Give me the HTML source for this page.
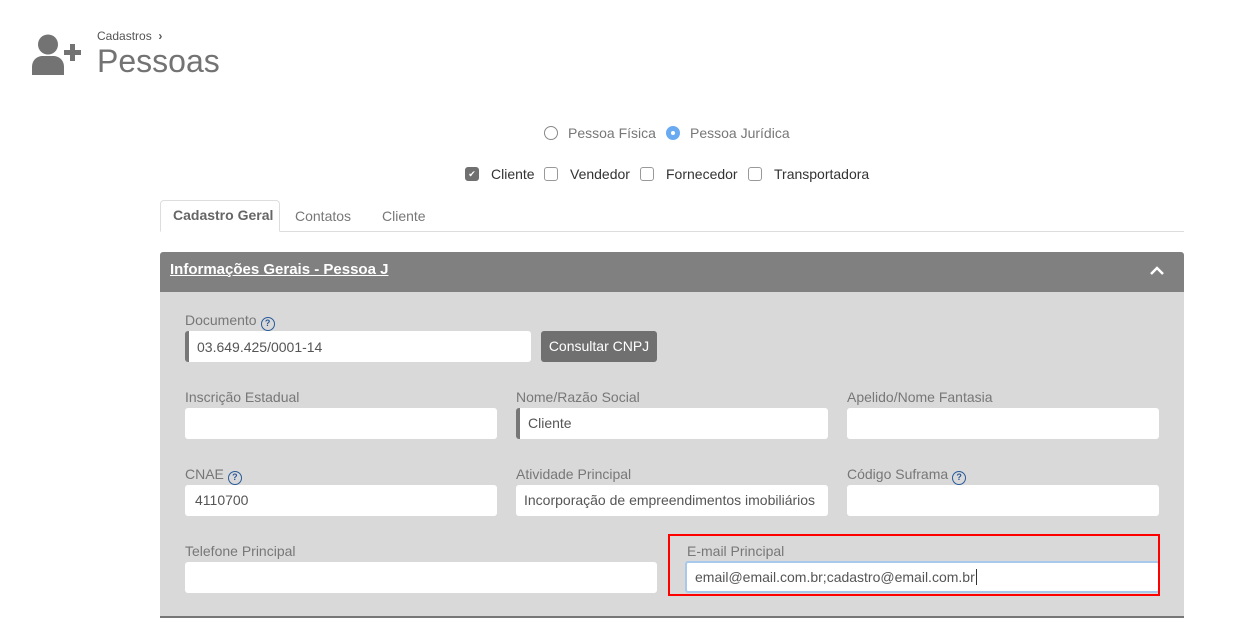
<!DOCTYPE html>
<html><head><meta charset="utf-8"><style>
*{box-sizing:border-box;margin:0;padding:0}
body{width:1234px;height:619px;background:#fff;font-family:"Liberation Sans",sans-serif;position:relative;overflow:hidden;color:#666}
.a{position:absolute}
.lbl{position:absolute;font-size:14px;color:#777}
.inp{position:absolute;background:#fff;border-radius:3px;height:31px;font-size:14px;color:#555;padding:8px 0 0 10px}
.bar{border-left:4px solid #777;padding-left:8px}
.q{display:inline-block;width:14px;height:14px;border:1.5px solid #2a5a9a;border-radius:50%;font-size:9px;font-weight:bold;color:#2a5a9a;text-align:center;line-height:11px;vertical-align:-1px;margin-left:4px}
.cb{position:absolute;width:14px;height:14px;border:1px solid #999;border-radius:3px;background:#fff}
.t{position:absolute;font-size:14px;color:#333}
</style></head><body>
<svg class="a" style="left:31px;top:34px" width="52" height="42" viewBox="0 0 52 42">
<circle cx="17" cy="10.5" r="10" fill="#737373"/>
<path d="M1 41 V33 C1 26 6 22 12 22 H22 C28 22 33 26 33 33 V41 Z" fill="#737373"/>
<rect x="39" y="10" width="5" height="17" fill="#737373"/><rect x="33" y="16" width="17" height="5" fill="#737373"/>
</svg>
<div class="a" style="left:97px;top:29px;font-size:12px;color:#555">Cadastros &nbsp;<b>›</b></div>
<div class="a" style="left:97px;top:43px;font-size:32px;color:#737373">Pessoas</div>

<div class="a" style="left:544px;top:126px;width:14px;height:14px;border:1px solid #888;border-radius:50%"></div>
<div class="t" style="left:568px;top:125px;color:#777">Pessoa Física</div>
<div class="a" style="left:666px;top:126px;width:14px;height:14px;border-radius:50%;background:#6aaaf0"><div class="a" style="left:5px;top:5px;width:4px;height:4px;border-radius:50%;background:#fff"></div></div>
<div class="t" style="left:690px;top:125px;color:#777">Pessoa Jurídica</div>

<div class="cb" style="left:465px;top:167px;background:#707070;border-color:#707070;color:#fff;font-size:9px;text-align:center;line-height:12px">✔</div>
<div class="t" style="left:491px;top:166px">Cliente</div>
<div class="cb" style="left:544px;top:167px"></div><div class="t" style="left:570px;top:166px">Vendedor</div>
<div class="cb" style="left:640px;top:167px"></div><div class="t" style="left:666px;top:166px">Fornecedor</div>
<div class="cb" style="left:748px;top:167px"></div><div class="t" style="left:774px;top:166px">Transportadora</div>

<div class="a" style="left:160px;top:231px;width:1024px;height:1px;background:#ddd"></div>
<div class="a" style="left:160px;top:200px;width:120px;height:32px;border:1px solid #ddd;border-bottom:1px solid #fff;border-radius:4px 4px 0 0;background:#fff"></div>
<div class="t" style="left:173px;top:207px;color:#666;font-weight:bold">Cadastro Geral</div>
<div class="t" style="left:295px;top:208px;color:#777">Contatos</div>
<div class="t" style="left:382px;top:208px;color:#777">Cliente</div>

<div class="a" style="left:160px;top:252px;width:1024px;height:40px;background:#808080;border-radius:3px 3px 0 0"></div>
<div class="a" style="left:170px;top:261px;font-size:15px;font-weight:bold;color:#fff;text-decoration:underline">Informações Gerais - Pessoa J</div>
<svg class="a" style="left:1149px;top:265px" width="16" height="12"><path d="M2 9 L8 3 L14 9" stroke="#fff" stroke-width="2.5" fill="none"/></svg>
<div class="a" style="left:160px;top:292px;width:1024px;height:326px;background:#d9d9d9;border-bottom:2px solid #777"></div>

<div class="lbl" style="left:185px;top:312px">Documento<span class="q">?</span></div>
<div class="inp bar" style="left:185px;top:331px;width:346px">03.649.425/0001-14</div>
<div class="a" style="left:541px;top:331px;width:116px;height:31px;background:#707070;border-radius:3px;color:#fff;font-size:14px;text-align:center;line-height:31px">Consultar CNPJ</div>

<div class="lbl" style="left:185px;top:389px">Inscrição Estadual</div>
<div class="inp" style="left:185px;top:408px;width:312px"></div>
<div class="lbl" style="left:516px;top:389px">Nome/Razão Social</div>
<div class="inp bar" style="left:516px;top:408px;width:312px;padding-top:7px">Cliente</div>
<div class="lbl" style="left:847px;top:389px">Apelido/Nome Fantasia</div>
<div class="inp" style="left:847px;top:408px;width:312px"></div>

<div class="lbl" style="left:185px;top:466px">CNAE<span class="q">?</span></div>
<div class="inp" style="left:185px;top:485px;width:312px;padding-top:7px">4110700</div>
<div class="lbl" style="left:516px;top:466px">Atividade Principal</div>
<div class="inp" style="left:516px;top:485px;width:312px;padding-left:8px;padding-top:7px">Incorporação de empreendimentos imobiliários</div>
<div class="lbl" style="left:847px;top:466px">Código Suframa<span class="q">?</span></div>
<div class="inp" style="left:847px;top:485px;width:312px"></div>

<div class="lbl" style="left:185px;top:543px">Telefone Principal</div>
<div class="inp" style="left:185px;top:562px;width:472px"></div>
<div class="lbl" style="left:687px;top:543px">E-mail Principal</div>
<div class="inp" style="left:685px;top:561px;width:475px;height:32px;border:2px solid #a8c8ec;padding-top:6px;padding-left:8px">email@email.com.br;cadastro@email.com.br<span style="border-left:1px solid #333;margin-left:1px"></span></div>
<div class="a" style="left:668px;top:534px;width:492px;height:62px;border:2px solid #f00"></div>
</body></html>
